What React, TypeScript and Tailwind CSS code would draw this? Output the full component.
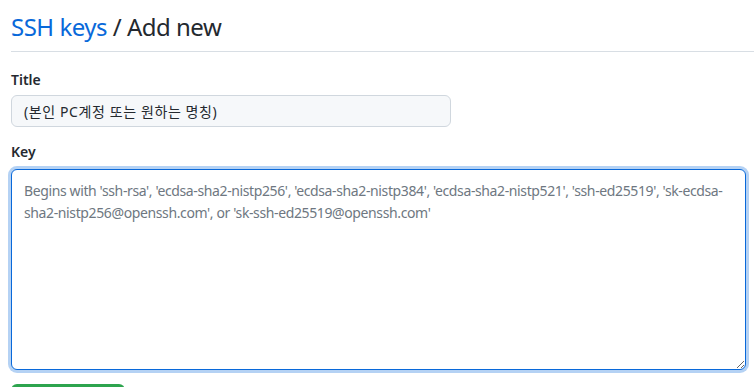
import React from 'react';

const App: React.FC = () => {
    return (
        <div className="min-h-screen bg-white pl-[11px] pt-[10px] font-['Noto_Sans','Noto_Sans_CJK_KR',sans-serif] text-[#24292f]">
            <div className="border-b border-[#d8dee4] pb-[8px]">
                <h2 className="text-[24px] leading-[33px] font-normal tracking-[-0.5px]">
                    <a href="#" className="text-[#0969da]">SSH keys</a> / Add new
                </h2>
            </div>

            <form className="pr-[8px]">
                <div className="mt-[17px]">
                    <label className="block text-[14px] leading-[21px] font-semibold">Title</label>
                    <input
                        type="text"
                        defaultValue="(본인 PC계정 또는 원하는 명칭)"
                        className="mt-[5px] block w-[440px] h-[32px] px-[12px] text-[14px] tracking-[0.6px] bg-[#f6f8fa] border border-[#d0d7de] rounded-[6px] outline-none text-[#24292f] font-['Noto_Sans','Noto_Sans_CJK_KR',sans-serif]"
                    />
                </div>

                <div className="mt-[14px]">
                    <label className="block text-[14px] leading-[21px] font-semibold">Key</label>
                    <textarea
                        autoFocus
                        placeholder="Begins with 'ssh-rsa', 'ecdsa-sha2-nistp256', 'ecdsa-sha2-nistp384', 'ecdsa-sha2-nistp521', 'ssh-ed25519', 'sk-ecdsa-sha2-nistp256@openssh.com', or 'sk-ssh-ed25519@openssh.com'"
                        className="mt-[7px] block w-[735px] h-[201px] px-[12px] py-[10px] text-[14px] leading-[22px] tracking-[-0.38px] bg-white border border-[#0969da] rounded-[6px] outline-none shadow-[0_0_0_3px_rgba(9,105,218,0.3)] placeholder:text-[#6e7781] font-['Noto_Sans','Noto_Sans_CJK_KR',sans-serif]"
                    />
                </div>

                <button
                    type="submit"
                    className="mt-[14px] w-[114px] h-[32px] rounded-[6px] bg-[#2da44e] text-white text-[14px] font-semibold"
                >
                    Add SSH key
                </button>
            </form>
        </div>
    );
};

export default App;
